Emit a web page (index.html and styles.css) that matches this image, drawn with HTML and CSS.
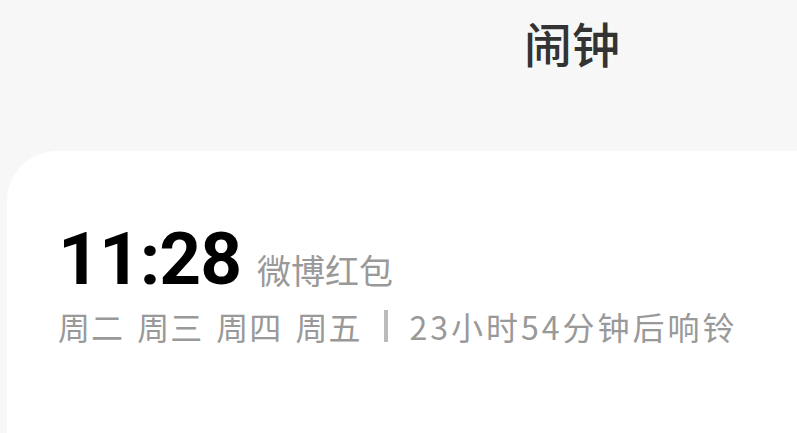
FILE: index.html
```html
<!DOCTYPE html>
<html lang="zh-CN">
<head>
<meta charset="utf-8">
<title>闹钟</title>
<link rel="stylesheet" href="styles.css">
</head>
<body>
<div class="page">
  <header class="header">
    <h1 class="title">闹钟</h1>
  </header>
  <section class="card">
    <div class="alarm">
      <div class="time-row">
        <span class="time">11:28</span>
        <span class="label">微博红包</span>
      </div>
      <div class="info-row">
        <span class="days">周二 周三 周四 周五</span>
        <span class="sep"></span>
        <span class="remain">23小时54分钟后响铃</span>
      </div>
    </div>
  </section>
</div>
</body>
</html>
```

FILE: styles.css
```css
html, body {
  margin: 0;
  padding: 0;
  background: #f7f7f7;
  overflow: hidden;
}
.page {
  width: 797px;
  height: 433px;
  display: flex;
  flex-direction: column;
  font-family: "Noto Sans CJK SC", "Noto Sans", sans-serif;
}
.header {
  height: 151px;
  flex: none;
  display: flex;
  justify-content: center;
  padding-left: 347px;
  box-sizing: border-box;
}
.title {
  margin: 16px 0 0 0;
  font-size: 48px;
  line-height: 52px;
  font-weight: 500;
  color: #333333;
}
.card {
  flex: 1;
  margin-left: 7px;
  background: #ffffff;
  border-top-left-radius: 50px;
  padding: 70px 0 0 51px;
}
.alarm {
  display: flex;
  flex-direction: column;
}
.time-row {
  display: flex;
  align-items: baseline;
  gap: 16px;
}
.time {
  font-family: Roboto, "Noto Sans", sans-serif;
  font-weight: 700;
  font-size: 73px;
  line-height: 76px;
  color: #000000;
  letter-spacing: -1px;
}
.label {
  font-size: 34px;
  color: #999999;
}
.info-row {
  display: flex;
  align-items: center;
  margin-top: 9px;
  font-size: 32px;
  line-height: 40px;
  color: #999999;
  white-space: pre;
}
.days {
  letter-spacing: 1px;
  word-spacing: 5px;
}
.sep {
  width: 4px;
  height: 32px;
  background: #bbbbbb;
  margin: 0 22px 0 22px;
}
.remain {
  letter-spacing: 3px;
}
```
